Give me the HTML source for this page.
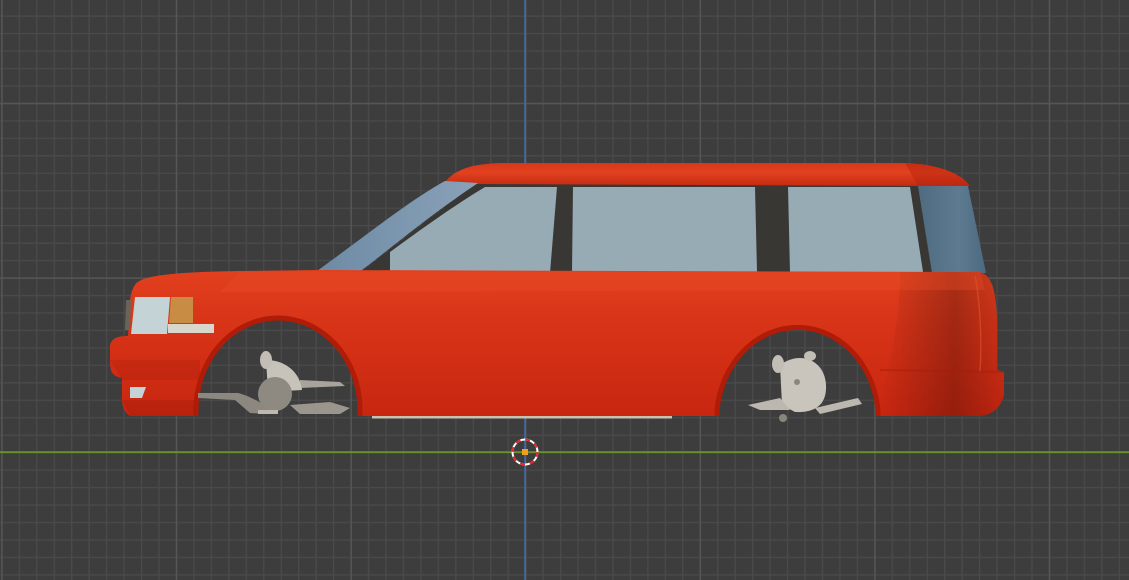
<!DOCTYPE html>
<html><head><meta charset="utf-8"><style>
html,body{margin:0;padding:0;background:#3d3d3d;overflow:hidden}
svg{display:block}
</style></head><body>
<svg width="1129" height="580" viewBox="0 0 1129 580" xmlns="http://www.w3.org/2000/svg">
<defs>
<pattern id="minor" x="1.2" y="15.5" width="17.46" height="17.46" patternUnits="userSpaceOnUse">
<rect width="17.46" height="17.46" fill="#3d3d3d"/>
<rect x="0" y="0" width="17.46" height="1.3" fill="#4a4a4a"/>
<rect x="0" y="0" width="1.3" height="17.46" fill="#4a4a4a"/>
</pattern>
<pattern id="major" x="1.2" y="102.8" width="174.6" height="174.6" patternUnits="userSpaceOnUse">
<rect x="0" y="0" width="174.6" height="1.4" fill="#565656"/>
<rect x="0" y="0" width="1.4" height="174.6" fill="#565656"/>
</pattern>
<linearGradient id="body" x1="0" y1="0" x2="0" y2="1">
<stop offset="0" stop-color="#e2401e"/>
<stop offset="0.35" stop-color="#d83418"/>
<stop offset="1" stop-color="#c82610"/>
</linearGradient>
<linearGradient id="rearShade" x1="0" y1="0" x2="1" y2="0">
<stop offset="0" stop-color="#000" stop-opacity="0"/>
<stop offset="0.6" stop-color="#000" stop-opacity="0.25"/>
<stop offset="1" stop-color="#000" stop-opacity="0.05"/>
</linearGradient>
<linearGradient id="roof" x1="0" y1="0" x2="0" y2="1">
<stop offset="0" stop-color="#d8361a"/>
<stop offset="0.4" stop-color="#e2421f"/>
<stop offset="1" stop-color="#c42a12"/>
</linearGradient>
<linearGradient id="ws" x1="0" y1="0" x2="1" y2="0">
<stop offset="0" stop-color="#6d8aa5"/>
<stop offset="1" stop-color="#8aa2b8"/>
</linearGradient>
<linearGradient id="rw" x1="0" y1="0" x2="1" y2="0">
<stop offset="0" stop-color="#4e6b80"/>
<stop offset="0.6" stop-color="#5d7a90"/>
<stop offset="1" stop-color="#4b6a80"/>
</linearGradient>
</defs>
<rect width="1129" height="580" fill="url(#minor)"/>
<rect width="1129" height="580" fill="url(#major)"/>
<!-- axes -->
<rect x="0" y="451.3" width="1129" height="1.6" fill="#6b9a25"/>
<rect x="524.3" y="0" width="1.5" height="580" fill="#3b6fb8"/>

<!-- roof -->
<path d="M445,182 C455,170 470,164 500,163 L905,163 C935,164 960,172 970,186 L445,186 Z" fill="url(#roof)"/>
<path d="M905,163 C935,164 960,172 970,186 L918,186 Z" fill="#b8240e" opacity="0.5"/>
<!-- dark window backdrop -->
<path d="M360,273 L475,184 L918,186 L934,273 Z" fill="#393734"/>
<!-- windshield -->
<path d="M317,271 C360,240 410,200 445,181 L478,183 C430,215 395,245 358,273 Z" fill="url(#ws)"/>
<!-- windows -->
<path d="M390,273 L390,252 C420,230 455,205 485,187 L557,187 L550,273 Z" fill="#97abb5"/>
<path d="M573,187 L755,187 L757,272 L572,272 Z" fill="#97abb5"/>
<path d="M788,187 L910,187 L923,272 L790,272 Z" fill="#97abb5"/>
<path d="M918,186 L968,186 L986,273 L932,273 Z" fill="url(#rw)"/>

<!-- main body -->
<path d="M135,285 C140,276 170,272 240,271 L320,270 L980,272 C992,276 996,290 997,320 L997,370 L1004,372 L1004,395 C1000,410 990,415 980,416 L878,416 L878,410 A81,93 0 0 0 717,410 L717,416 L360,416 L360,410 A82,92 0 0 0 196,410 L196,416 L130,416 C124,412 122,405 122,400 L122,378 C112,376 110,372 110,360 L110,345 C112,338 118,336 128,336 L130,300 C131,292 133,288 135,285 Z" fill="url(#body)"/>
<!-- rear shading -->
<path d="M900,272 L980,272 C992,276 996,290 997,320 L997,370 L1004,372 L1004,395 C1000,410 990,415 980,416 L880,416 L880,400 C885,380 900,330 900,272 Z" fill="url(#rearShade)"/>
<path d="M975,276 C980,300 982,340 980,372" stroke="#e4502c" stroke-width="1.5" fill="none" opacity="0.6"/>
<path d="M880,370 L1004,372" stroke="#a81e0a" stroke-width="2" opacity="0.5"/>
<!-- top highlight band -->
<path d="M240,272 L980,272 L985,290 L220,292 Z" fill="#e94d28" opacity="0.35"/>
<!-- arch rims -->
<path d="M196,416 L196,410 A82,92 0 0 1 360,410 L360,416" fill="none" stroke="#b01c08" stroke-width="5"/>
<path d="M717,416 L717,410 A81,93 0 0 1 878,410 L878,416" fill="none" stroke="#b01c08" stroke-width="5"/>
<!-- front bumper shading -->
<path d="M110,360 L200,360 L200,380 L122,380 Z" fill="#a81e0a" opacity="0.3"/>
<path d="M122,400 L196,400 L196,416 L130,416 Z" fill="#a01a08" opacity="0.35"/>
<!-- headlights -->
<path d="M135,297 L170,297 L167,334 L131,334 Z" fill="#c4d3d5"/>
<path d="M171,297 L193,297 L193,323 L169,323 Z" fill="#c98c45"/>
<path d="M168,324 L214,324 L214,333 L168,333 Z" fill="#d9d6cc"/>
<path d="M126,300 L131,300 L130,330 L125,330 Z" fill="#6a6458"/>
<path d="M130,387 L146,387 L142,398 L130,398 Z" fill="#c4d3d5"/>
<!-- sill line -->
<rect x="372" y="416" width="300" height="2.5" fill="#c9c1b0"/>

<!-- front suspension -->
<g fill="#8c8880">
<path d="M198,393 L238,393 C250,396 258,402 268,406 L270,414 L250,413 L235,400 L198,398 Z"/>
<path d="M290,405 L330,402 L350,408 L340,414 L300,414 Z" fill="#9a968d"/>
<path d="M300,380 L340,382 L345,386 L300,388 Z" fill="#a8a49b"/>
</g>
<path d="M266,360 C285,360 300,372 302,390 L268,392 Z" fill="#c7c3bb"/>
<ellipse cx="266" cy="360" rx="6" ry="9" fill="#c2beb6"/>
<circle cx="275" cy="394" r="17" fill="#8e8a82"/>
<rect x="258" y="410" width="20" height="4" fill="#bdb9b0"/>
<!-- rear suspension -->
<path d="M780,365 C800,350 825,360 826,385 C827,405 815,413 795,412 L782,405 Z" fill="#c9c5bd"/>
<ellipse cx="778" cy="364" rx="6" ry="9" fill="#c2beb6"/>
<ellipse cx="810" cy="356" rx="6" ry="5" fill="#c2beb6"/>
<circle cx="797" cy="382" r="3" fill="#8a867e"/>
<path d="M748,405 L780,398 L790,410 L760,410 Z" fill="#bcb8b0"/>
<path d="M815,408 L858,398 L862,404 L820,414 Z" fill="#bcb8b0"/>
<circle cx="783" cy="418" r="4" fill="#8a867e"/>

<!-- 3D cursor -->
<circle cx="525" cy="452" r="12.5" fill="none" stroke="#ffffff" stroke-width="2"/>
<circle cx="525" cy="452" r="12.5" fill="none" stroke="#e0242a" stroke-width="2" stroke-dasharray="4.9 4.9"/>
<rect x="522" y="449" width="6" height="6" fill="#f0a020"/>
</svg>
</body></html>
